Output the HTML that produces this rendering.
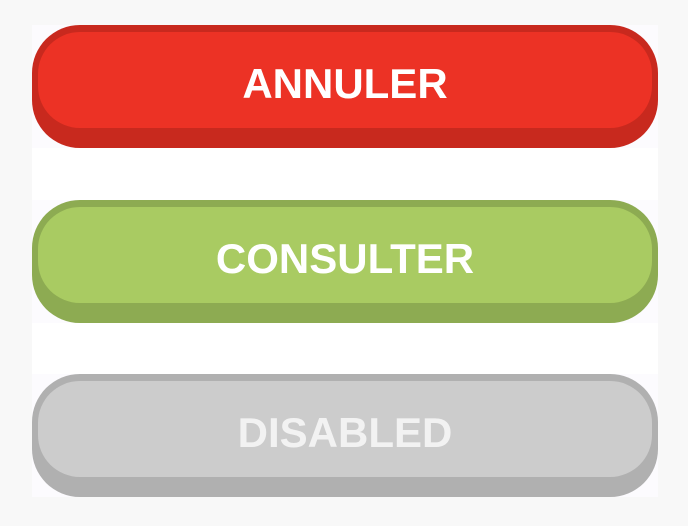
<!DOCTYPE html>
<html><head><style>
html,body{margin:0;padding:0;width:688px;height:526px;background:#f8f8f8;overflow:hidden}
.panel{position:absolute;left:32px;top:25px;width:626px;height:471px;background:#fff}
.row{position:absolute;left:32px;width:626px;height:123px;background:#fcfbfe}
.btn{position:absolute;left:32px;width:626px;height:123px;border-radius:48px;box-sizing:border-box;}
.face{position:absolute;left:6px;right:6px;top:7px;bottom:20px;border-radius:42px;display:flex;align-items:center;justify-content:center;font-family:"Liberation Sans",sans-serif;font-weight:bold;font-size:42px;color:#fff;padding-top:8px;box-sizing:border-box}
</style></head><body>
<div class="panel"></div>
<div class="row" style="top:25px"></div>
<div class="row" style="top:200px"></div>
<div class="row" style="top:374px"></div>
<div class="btn" style="top:25px;background:#c8291e"><div class="face" style="background:#ec3225">ANNULER</div></div>
<div class="btn" style="top:200px;background:#8dab52"><div class="face" style="background:#a9cb62">CONSULTER</div></div>
<div class="btn" style="top:374px;background:#b0b0b0"><div class="face" style="background:#cccccc;color:#f2f2f2">DISABLED</div></div>
</body></html>
